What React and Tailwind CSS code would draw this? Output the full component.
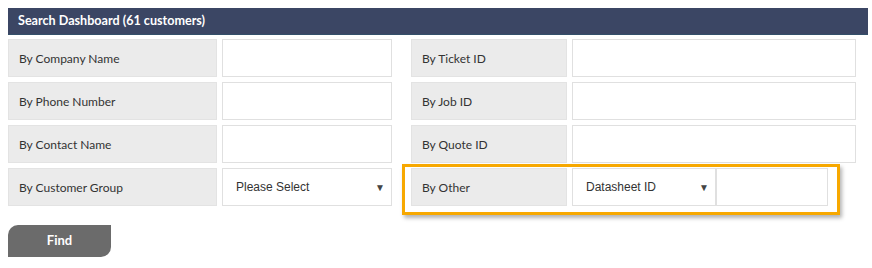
import React from "react";

const Label = ({ children, className = "" }) => (
  <div className={`h-[38px] flex items-center pl-[10px] pt-[1px] bg-[#ebebeb] border border-[#e3e3e3] text-[12px] text-[#333] ${className}`}>
    {children}
  </div>
);

const Input = ({ className = "" }) => (
  <div className={`h-[38px] bg-white border border-[#e0e0e0] ${className}`} />
);

const Select = ({ value, className = "" }) => (
  <div
    className={`h-[38px] bg-white border border-[#e0e0e0] flex items-center justify-between pl-[13px] pr-[6px] text-[12px] text-[#333] ${className}`}
    style={{ fontFamily: '"Liberation Sans", Arial, sans-serif' }}
  >
    <span>{value}</span>
    <span className="text-[10px] text-[#444]">▼</span>
  </div>
);

const App = () => {
  return (
    <div className="w-[872px] h-[268px] bg-white pt-[8px] pl-[8px]" style={{ fontFamily: "Lato, sans-serif" }}>
      <div className="w-[860px] h-[27px] bg-[#3b4664] flex items-center pl-[10px] text-white font-bold text-[12.6px] border-b border-[#34506a]">
        Search Dashboard (61 customers)
      </div>
      <div className="flex flex-col gap-[5px] mt-[4px]">
        <div className="flex">
          <Label className="w-[209px]">By Company Name</Label>
          <Input className="w-[170px] ml-[5px]" />
          <Label className="w-[156px] ml-[19px]">By Ticket ID</Label>
          <Input className="w-[284px] ml-[5px]" />
        </div>
        <div className="flex">
          <Label className="w-[209px]">By Phone Number</Label>
          <Input className="w-[170px] ml-[5px]" />
          <Label className="w-[156px] ml-[19px]">By Job ID</Label>
          <Input className="w-[284px] ml-[5px]" />
        </div>
        <div className="flex">
          <Label className="w-[209px]">By Contact Name</Label>
          <Input className="w-[170px] ml-[5px]" />
          <Label className="w-[156px] ml-[19px]">By Quote ID</Label>
          <Input className="w-[284px] ml-[5px]" />
        </div>
        <div className="flex">
          <Label className="w-[209px]">By Customer Group</Label>
          <Select value="Please Select" className="w-[170px] ml-[5px]" />
          <div className="relative flex ml-[19px]">
            <Label className="w-[156px]">By Other</Label>
            <Select value="Datasheet ID" className="w-[144px] ml-[5px]" />
            <Input className="w-[112px]" />
            <div className="absolute left-[-9px] top-[-4px] w-[438px] h-[51px] border-[3px] border-[#f7a800] shadow-[2px_3px_4px_rgba(0,0,0,0.3)] pointer-events-none" />
          </div>
        </div>
      </div>
      <button className="mt-[19px] w-[103px] h-[32px] bg-[#6b6b6b] text-white font-bold text-[13px] rounded-tl-[10px] rounded-br-[10px]">
        Find
      </button>
    </div>
  );
};

export default App;
